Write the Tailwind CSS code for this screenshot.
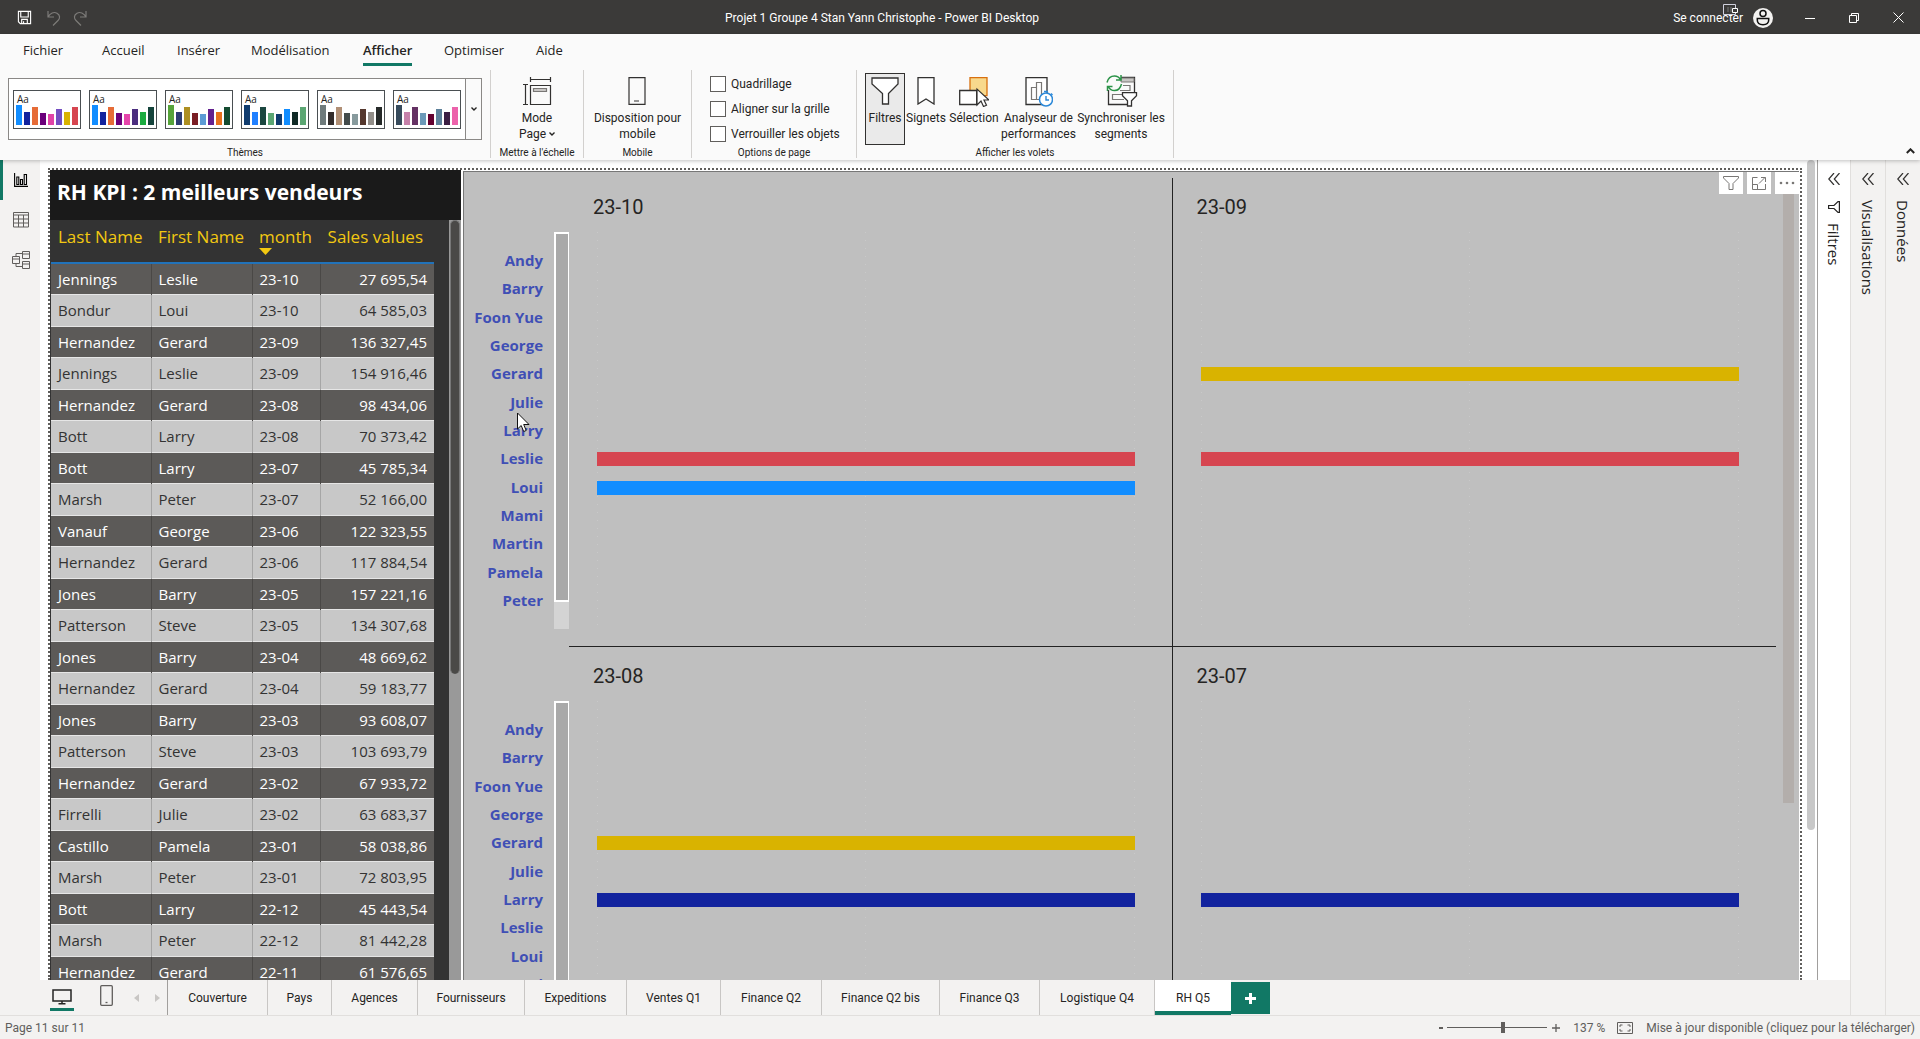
<!DOCTYPE html>
<html lang="fr">
<head>
<meta charset="utf-8">
<title>Projet 1 Groupe 4 Stan Yann Christophe - Power BI Desktop</title>
<script src="https://cdn.jsdelivr.net/npm/@tailwindcss/browser@4"></script>
</head>
<body class="h-screen flex flex-col overflow-hidden bg-[#f3f2f1] font-['Open_Sans','Noto_Sans',sans-serif] text-[#252423]">

<!-- Title bar -->
<header class="relative h-[34px] shrink-0 bg-[#3b3a39] text-white flex items-center justify-between pt-px font-[Roboto,sans-serif] text-xs">
  <div class="flex items-center gap-3 pl-[17px]">
    <button aria-label="Enregistrer" class="w-[18px]"><svg width="15" height="15" viewBox="0 0 16 16" fill="none" stroke="#fff" stroke-width="1.2"><path d="M1.5 1.5h13v13h-11l-2-2zM4 1.5v6h8v-6M5 14.500v-4.500h6v4.500M7 12v2.500"/></svg></button>
    <button aria-label="Annuler" class="w-[14px]"><svg width="14" height="16" viewBox="0 0 14 16" fill="none" stroke="#7d7b79" stroke-width="1.2"><path d="M1 1v6h6M1 7C3 3 7 1.500 10 3.200c3.500 2 3 5.300 1 7.300L6 15.500"/></svg></button>
    <button aria-label="Rétablir" class="w-[14px]"><svg width="14" height="16" viewBox="0 0 14 16" fill="none" stroke="#7d7b79" stroke-width="1.2"><path d="M13 1v6H7M13 7C11 3 7 1.500 4 3.200c-3.500 2-3 5.300-1 7.300l5 5"/></svg></button>
  </div>
  <h1 class="absolute left-1/2 -translate-x-1/2 pr-[156px] whitespace-nowrap">Projet 1 Groupe 4 Stan Yann Christophe - Power BI Desktop</h1>
  <div class="flex items-center pr-4">
    <div class="relative"><button>Se connecter</button>
      <svg class="absolute -top-[6px] left-[50px]" width="16" height="12" viewBox="0 0 16 12"><path d="M.5.5h12v10H.5z" fill="#3b3a39" stroke="#d0d0dc"/><path d="M5 3v5M8 3v5" stroke="#777"/><path d="M9.500 4.500h5v4h-5z" fill="#3b3a39" stroke="#fff"/></svg></div>
    <button aria-label="Compte" class="ml-[10px]"><svg width="20" height="20" viewBox="0 0 20 20"><circle cx="10" cy="10" r="10" fill="#f3f2f1"/><circle cx="10" cy="5.500" r="3" fill="none" stroke="#111" stroke-width="1.500"/><path d="M4.300 10.500h11.400v1.500c0 3-2.500 4.700-5.700 4.700s-5.700-1.700-5.700-4.700z" fill="none" stroke="#111" stroke-width="1.500"/></svg></button>
    <button aria-label="Réduire" class="ml-8"><svg width="10" height="10"><path d="M0 5.500h10" stroke="#fff"/></svg></button>
    <button aria-label="Restaurer" class="ml-[34px]"><svg width="10" height="10" viewBox="0 0 10 10" fill="none" stroke="#fff"><path d="M.5 2.500h7v7h-7zM2.500 2.500v-2h7v7h-2"/></svg></button>
    <button aria-label="Fermer" class="ml-[34px]"><svg width="11" height="11" viewBox="0 0 11 11" stroke="#fff"><path d="M.5.500l10 10M10.500.500l-10 10"/></svg></button>
  </div>
</header>

<!-- Ribbon -->
<div class="relative z-10 h-[126px] shrink-0 bg-[#fafafa] shadow-[0_1px_4px_rgba(0,0,0,0.25)]">
  <nav class="flex h-8 items-end pl-[23px] text-[13px] leading-6">
    <a href="#" class="w-[79px] pb-1">Fichier</a>
    <a href="#" class="w-[75px] pb-1">Accueil</a>
    <a href="#" class="w-[74px] pb-1">Insérer</a>
    <a href="#" class="w-[112px] pb-1">Modélisation</a>
    <a href="#" class="w-[81px] font-semibold"><span class="inline-block border-b-[3px] border-[#117865] pb-px">Afficher</span></a>
    <a href="#" class="w-[92px] pb-1">Optimiser</a>
    <a href="#" class="pb-1">Aide</a>
  </nav>
  <div class="flex h-[88px] mt-1 font-[Roboto,sans-serif] text-xs leading-4">
    <section class="w-[491px] border-r border-[#d2d0ce] flex flex-col pl-2 pr-2 pt-2">
      <div class="flex h-[62px] border border-[#8a8886] bg-white">
        <div id="themes" class="flex-1 flex items-center gap-2 pl-1"></div>
        <button aria-label="Plus de thèmes" class="w-4 border-l border-[#8a8886] bg-[#fafafa] grid place-items-center"><svg width="6" height="4" viewBox="0 0 6 4" fill="none" stroke="#252423" stroke-width="1.400"><path d="M.5.500L3 3 5.500.500"/></svg></button>
      </div>
      <h2 class="mt-auto -mb-px text-[10px] leading-3 text-center">Thèmes</h2>
    </section>
    <section class="w-[93px] border-r border-[#d2d0ce] flex flex-col items-center pt-[7px]">
      <button class="flex flex-col items-center">
        <svg width="30" height="28" viewBox="0 0 30 28" fill="none" stroke="#323130" stroke-width="1.200"><path d="M8.500 2.500h20M8.500 0v5M28.500 0v5M3.500 8v19M1 7.500h5M1 27.500h5M8.500 8.500h20v19h-20z"/><path d="M11.500 11.500h13v3h-13z" fill="#c8c6c4" stroke="#797775"/></svg>
        <span class="mt-[5px]">Mode</span><span class="flex items-center gap-[3px]">Page <svg width="6" height="4" viewBox="0 0 6 4" fill="none" stroke="#252423" stroke-width="1.400"><path d="M.5.500L3 3 5.500.500"/></svg></span></button>
      <h2 class="mt-auto -mb-px text-[10px] leading-3">Mettre à l'échelle</h2>
    </section>
    <section class="w-[108px] border-r border-[#d2d0ce] flex flex-col items-center pt-[7px]">
      <button class="flex flex-col items-center">
        <svg width="18" height="28" viewBox="0 0 18 28" fill="none" stroke="#323130" stroke-width="1.200"><path d="M1 .600h16v26.800H1zM6 24h5"/></svg>
        <span class="mt-[5px]">Disposition pour</span><span>mobile</span></button>
      <h2 class="mt-auto -mb-px text-[10px] leading-3">Mobile</h2>
    </section>
    <section class="w-[165px] border-r border-[#d2d0ce] flex flex-col pt-[6px]">
      <div class="flex flex-col gap-[9px] pl-[18px]">
        <label class="flex items-center gap-[5px]"><input type="checkbox" class="appearance-none size-4 border border-[#605e5c] bg-white">Quadrillage</label>
        <label class="flex items-center gap-[5px]"><input type="checkbox" class="appearance-none size-4 border border-[#605e5c] bg-white">Aligner sur la grille</label>
        <label class="flex items-center gap-[5px]"><input type="checkbox" class="appearance-none size-4 border border-[#605e5c] bg-white">Verrouiller les objets</label>
      </div>
      <h2 class="mt-auto -mb-px text-[10px] leading-3 text-center">Options de page</h2>
    </section>
    <section class="w-[317px] border-r border-[#d2d0ce] flex flex-col pt-[3px]">
      <div class="flex pl-2">
        <button class="w-10 h-[72px] shrink-0 border border-[#323130] bg-[#eaeaea] flex flex-col items-center pt-[3px]">
          <svg width="28" height="28" viewBox="0 0 28 28" fill="#fff" stroke="#323130" stroke-width="1.300"><path d="M1 1h26v6l-9.500 9.500V27h-6V16.500L1 7z"/></svg><span class="mt-[5px]">Filtres</span></button>
        <button class="w-[42px] shrink-0 flex flex-col items-center pt-1">
          <svg width="18" height="28" viewBox="0 0 18 28" fill="#fff" stroke="#323130" stroke-width="1.300"><path d="M1 .700h16V27l-8-5-8 5z"/></svg><span class="mt-[5px]">Signets</span></button>
        <button class="w-[54px] shrink-0 flex flex-col items-center pt-1">
          <svg width="30" height="30" viewBox="0 0 30 30"><path d="M11 .700h17v18H11z" fill="#f8d98c" stroke="#d8700f" stroke-width="1.300"/><path d="M.700 13.500h17v14h-17z" fill="#fff" stroke="#323130" stroke-width="1.300"/><path d="M18 12v16l4-4 2.500 5.500 3-1.300-2.500-5.200h5z" fill="#fff" stroke="#323130" stroke-width="1.200"/></svg><span class="mt-[3px]">Sélection</span></button>
        <button class="w-[75px] shrink-0 flex flex-col items-center pt-1">
          <svg width="28" height="30" viewBox="0 0 28 30" fill="none"><path d="M1 .700h21V27.500H1z" fill="#fff" stroke="#323130" stroke-width="1.300"/><path d="M6.500 10.500h5v12h-5zM11.500 5.500h5v17h-5z" stroke="#797775" stroke-width="1.200"/><circle cx="21" cy="22.500" r="6.500" fill="#fff" stroke="#2b88d8" stroke-width="1.500"/><path d="M21 19v4h3M19 14.500h4M26 16.500l1.500 1.500" stroke="#2b88d8" stroke-width="1.400"/></svg><span class="mt-[3px]">Analyseur de</span><span>performances</span></button>
        <button class="w-[90px] shrink-0 flex flex-col items-center pt-[2px]">
          <svg width="34" height="32" viewBox="0 0 34 32" fill="none"><path d="M4.500 15v14.500h19M17 2.500h13.500V17" stroke="#323130" stroke-width="1.300"/><path d="M17 3h13v4H17z" fill="#c8c6c4" stroke="#797775"/><path d="M19 10.500h7v5h-10M20 19.500H8.500v5H20" stroke="#797775" stroke-width="1.200"/><path d="M3 7.500c1-4 4-6.500 7.500-6.500 2.500 0 4.500 1 6 3.500M17 0v5h-5M17.500 9c-1 4-3.500 6.500-7 6.500-2.700 0-4.700-1-6-3.500M3.500 16v-4.500h5" stroke="#2b9348" stroke-width="1.500"/><path d="M18.500 17.700h14v3l-5 5V31h-4v-5.300l-5-5z" fill="#fff" stroke="#323130" stroke-width="1.300"/></svg><span class="mt-[3px]">Synchroniser les</span><span>segments</span></button>
      </div>
      <h2 class="mt-auto -mb-px text-[10px] leading-3 text-center">Afficher les volets</h2>
    </section>
    <button aria-label="Réduire le ruban" class="ml-auto mr-[5px] self-end pb-1"><svg width="9" height="6" viewBox="0 0 9 6" fill="none" stroke="#252423" stroke-width="2"><path d="M.800 5L4.500 1.300 8.200 5"/></svg></button>
  </div>
</div>

<main class="flex-1 min-h-0 flex">
  <div class="flex-1 min-w-0 flex flex-col">
    <div class="flex-1 min-h-0 flex">
      <!-- View switcher -->
      <nav class="w-10 shrink-0 flex flex-col">
        <button aria-label="Rapport" class="h-10 border-l-[3px] border-[#117865] pl-[11px]"><svg width="14" height="14" viewBox="0 0 14 14" fill="none" stroke="#000" stroke-width="1.100"><path d="M.6 0v13.400H14M2.800 11.500v-7.500h2v7.500zM6.500 11.500V6.500h2v5zM10.200 11.500V1.500h2.300v10z"/></svg></button>
        <button aria-label="Table" class="h-10 pl-[13px]"><svg width="16" height="16" viewBox="0 0 16 16" fill="none" stroke="#605e5c"><path d="M.5.500h15v14.500H.5zM.5 3h15M.5 7h15M.5 11h15M5.500 3v12M10.500 3v12"/></svg></button>
        <button aria-label="Modèle" class="h-10 pl-3"><svg width="18" height="18" viewBox="0 0 18 18" fill="none" stroke="#605e5c"><path d="M.5 5.500h7v7h-7zM.5 8h7M10.500.500h7v7h-7zM10.500 3h7M10.500 10.500h7v7h-7zM10.500 13h7M4 5.500v-3h6.500M4 12.500v3h6.500"/></svg></button>
      </nav>

      <!-- Report canvas -->
      <div class="flex-1 min-w-0 flex bg-white overflow-hidden">
        <div class="flex-1 min-w-0 ml-2 mt-2 flex border-2 border-b-0 border-dotted border-[#605e5c]">
          <section class="w-[411px] shrink-0 bg-[#333] overflow-hidden">
            <h2 class="h-[50px] bg-[#1a1a1a] text-white font-bold text-[21px] leading-[44px] pl-[7px]">RH KPI : 2 meilleurs vendeurs</h2>
            <div class="flex justify-between h-full">
              <table class="w-[383px] ml-px table-fixed border-collapse self-start">
                <colgroup><col class="w-[100px]"><col class="w-[101px]"><col class="w-[68px]"><col class="w-[114px]"></colgroup>
                <thead><tr class="h-[43px] border-b-2 border-[#2172b9] text-[#f2c811] text-[17px] leading-6 text-left whitespace-nowrap">
                  <th class="font-normal pl-[7px] pt-[5px] align-top">Last Name</th><th class="font-normal pl-[7px] pt-[5px] align-top">First Name</th>
                  <th class="font-normal pl-[7px] pt-[5px] align-top relative">month<svg class="absolute left-[7px] top-[28px]" width="13" height="7"><path d="M0 0h13L6.500 7z" fill="#f2c811"/></svg></th>
                  <th class="font-normal pr-[11px] pt-[5px] align-top text-right">Sales values</th></tr></thead>
                <tbody id="rows" class="text-[15px] leading-6"></tbody>
              </table>
              <div class="w-3 bg-[#999] px-px"><div class="h-[454px] rounded-full bg-[#4a4947] border-x border-t border-[#777]"></div></div>
            </div>
          </section>

          <section class="relative flex-1 min-w-0 ml-[2px] mt-px mr-px bg-[#bfbfbf] border-l border-t border-[#777] flex overflow-hidden">
            <div id="facets" class="flex-1 min-w-0 pt-[6px]"></div>
            <div class="w-[7px] shrink-0"></div>
            <div class="w-[11px] h-[631px] bg-[#b3aeab] shrink-0 mr-[5px]"></div>
            <div class="absolute top-0 right-0 flex gap-1">
              <button aria-label="Filtres" class="w-6 h-[22px] bg-white grid place-items-center"><svg width="16" height="14" viewBox="0 0 16 14" fill="none" stroke="#797775"><path d="M.5.500h15v1.500L10 7.500v6H6v-6L.5 2z"/></svg></button>
              <button aria-label="Mode focus" class="w-6 h-[22px] bg-white grid place-items-center"><svg width="14" height="13" viewBox="0 0 14 13" fill="none" stroke="#797775"><path d="M5.500.500h-5v12h13V7M.5 7.500h5v5M7 6.500l6-6M9 .500h4.500V5"/></svg></button>
              <button aria-label="Plus d'options" class="w-6 h-[22px] bg-white grid place-items-center"><svg width="16" height="4" fill="#797775"><circle cx="2" cy="2" r="1.300"/><circle cx="8" cy="2" r="1.300"/><circle cx="14" cy="2" r="1.300"/></svg></button>
            </div>
            <svg class="absolute left-[53px] top-[240px]" width="13" height="21" viewBox="0 0 13 21"><path d="M.5 1v16l3.700-3.500 2.500 6 2.500-1-2.500-6H12z" fill="#fff" stroke="#111"/></svg>
          </section>
        </div>
        <div class="w-[15px] shrink-0 pl-[5px]"><div class="w-2 h-[670px] rounded-full bg-[#c8c8c8]"></div></div>
      </div>

      <!-- Collapsed filter pane -->
      <aside class="w-[33px] shrink-0 bg-white border-l border-[#a19f9d] flex flex-col items-center pt-[13px]">
        <button aria-label="Développer Filtres"><svg width="12" height="12" viewBox="0 0 12 12" fill="none" stroke="#323130" stroke-width="1.200"><path d="M6 0L.800 6 6 12M11.500 0L6.300 6l5.200 6"/></svg></button>
        <svg class="mt-4" width="12" height="12" viewBox="0 0 12 12" fill="none" stroke="#252423" stroke-width="1.200"><path d="M11.400.600v10.800H10L6 7.500H.6v-3H6L10 .600z"/></svg>
        <h2 class="mt-[10px] text-[15px] leading-5 font-medium [writing-mode:vertical-rl]">Filtres</h2>
      </aside>
    </div>

    <!-- Page tabs -->
    <nav class="h-[35px] shrink-0 flex items-stretch font-[Roboto,sans-serif] text-xs">
      <div class="w-[168px] shrink-0 border-r border-[#a19f9d] flex items-start pl-[50px]">
        <button aria-label="Disposition bureau" class="w-6 h-[31px] pt-[6px] pl-[2px] border-b-[3px] border-[#117865]"><svg width="20" height="16" viewBox="0 0 20 16" fill="none" stroke="#252423" stroke-width="1.500"><path d="M1 1h18v11H1zM10 12v3M6.500 14.700h7"/></svg></button>
        <button aria-label="Disposition mobile" class="ml-[26px] pt-[5px]"><svg width="13" height="21" viewBox="0 0 13 21" fill="none" stroke="#605e5c" stroke-width="1.300"><rect x=".7" y=".7" width="11.600" height="19.600" rx="1"/><path d="M5.500 17.500h2"/></svg></button>
        <button aria-label="Page précédente" class="ml-[21px] pt-[14px]"><svg width="5" height="8"><path d="M5 0v8L0 4z" fill="#c8c6c4"/></svg></button>
        <button aria-label="Page suivante" class="ml-[16px] pt-[14px]"><svg width="5" height="8"><path d="M0 0v8l5-4z" fill="#c8c6c4"/></svg></button>
      </div>
      <a href="#" class="w-[100px] pt-px border-r border-[#c8c6c4] grid place-items-center">Couverture</a>
      <a href="#" class="w-[64px] pt-px border-r border-[#c8c6c4] grid place-items-center">Pays</a>
      <a href="#" class="w-[86px] pt-px border-r border-[#c8c6c4] grid place-items-center">Agences</a>
      <a href="#" class="w-[107px] pt-px border-r border-[#c8c6c4] grid place-items-center">Fournisseurs</a>
      <a href="#" class="w-[102px] pt-px border-r border-[#c8c6c4] grid place-items-center">Expeditions</a>
      <a href="#" class="w-[94px] pt-px border-r border-[#c8c6c4] grid place-items-center">Ventes Q1</a>
      <a href="#" class="w-[101px] pt-px border-r border-[#c8c6c4] grid place-items-center">Finance Q2</a>
      <a href="#" class="w-[118px] pt-px border-r border-[#c8c6c4] grid place-items-center">Finance Q2 bis</a>
      <a href="#" class="w-[100px] pt-px border-r border-[#c8c6c4] grid place-items-center">Finance Q3</a>
      <a href="#" class="w-[115px] pt-px border-r border-[#c8c6c4] grid place-items-center">Logistique Q4</a>
      <a href="#" class="w-[76px] bg-white border-b-4 border-[#117865] grid place-items-center pt-[5px]">RH Q5</a>
      <button aria-label="Nouvelle page" class="w-[39px] mt-[2px] mb-px bg-[#117865] grid place-items-center"><svg width="11" height="11" stroke="#fff" stroke-width="3"><path d="M5.500 0v11M0 5.500h11"/></svg></button>
    </nav>
  </div>

  <aside class="w-[35px] shrink-0 border-l border-[#e1dfdd] flex flex-col items-center pt-[13px]">
    <button aria-label="Développer Visualisations"><svg width="12" height="12" viewBox="0 0 12 12" fill="none" stroke="#323130" stroke-width="1.200"><path d="M6 0L.800 6 6 12M11.500 0L6.300 6l5.200 6"/></svg></button>
    <h2 class="mt-[15px] text-[15px] leading-5 font-medium [writing-mode:vertical-rl]">Visualisations</h2>
  </aside>
  <aside class="w-[35px] shrink-0 border-l border-[#e1dfdd] flex flex-col items-center pt-[13px]">
    <button aria-label="Développer Données"><svg width="12" height="12" viewBox="0 0 12 12" fill="none" stroke="#323130" stroke-width="1.200"><path d="M6 0L.800 6 6 12M11.500 0L6.300 6l5.200 6"/></svg></button>
    <h2 class="mt-[15px] text-[15px] leading-5 font-medium [writing-mode:vertical-rl]">Données</h2>
  </aside>
</main>

<!-- Status bar -->
<footer class="h-6 shrink-0 border-t border-[#e1dfdd] flex items-center px-[5px] font-[Roboto,sans-serif] text-xs text-[#605e5c]">
  <span>Page 11 sur 11</span>
  <div class="ml-auto flex items-center">
    <button aria-label="Zoom arrière" class="w-1 h-[2px] bg-[#605e5c]"></button>
    <input type="range" aria-label="Zoom" min="10" max="264" value="153" class="ml-1 appearance-none w-[100px] h-4 bg-transparent [&::-webkit-slider-runnable-track]:h-px [&::-webkit-slider-runnable-track]:bg-[#605e5c] [&::-webkit-slider-thumb]:appearance-none [&::-webkit-slider-thumb]:w-1 [&::-webkit-slider-thumb]:h-[11px] [&::-webkit-slider-thumb]:-mt-[5px] [&::-webkit-slider-thumb]:bg-[#605e5c]">
    <button aria-label="Zoom avant" class="ml-[5px] grid place-items-center"><svg width="8" height="8" stroke="#605e5c"><path d="M4 0v8M0 4h8" stroke-width="1.300"/></svg></button>
    <span class="ml-[13px]">137 %</span>
    <button aria-label="Ajuster à la page" class="ml-3"><svg width="16" height="12" viewBox="0 0 16 12" fill="none" stroke="#605e5c"><path d="M.5.500h15v11H.5zM3 5V3h2.500M10.500 3H13v2M13 7v2h-2.500M5.500 9H3V7"/></svg></button>
    <a href="#" class="ml-[13px]">Mise à jour disponible (cliquez pour la télécharger)</a>
  </div>
</footer>

<script>
// Theme thumbnails: one list of bar colours per theme
const heights = [20, 13, 18, 12, 11, 16, 13, 18];
const themes = [
  ['#118dff','#12239e','#e66c37','#6b007b','#e044a7','#744ec2','#d9b300','#d64550'],
  ['#118dff','#12239e','#e66c37','#6b007b','#e645ab','#4b2e7f','#1aab40','#15443c'],
  ['#56a33a','#2d3c72','#ad8f22','#7a1d24','#5b9bd5','#63208f','#e8711c','#144b31'],
  ['#103c6e','#2080ff','#1b4740','#5ba673','#103c6e','#118dff','#102a26','#5ba673'],
  ['#6e7a7b','#322c2b','#b08f75','#434b4b','#879a9d','#55382e','#928e89','#262a29'],
  ['#374b5c','#c681aa','#643163','#6c9ab9','#63002f','#5c809a','#3b1e42','#ec62ab'],
];
document.getElementById('themes').innerHTML = themes.map((t, i) => `
  <button aria-label="Thème ${i + 1}" class="w-[68px] h-[39px] border border-[#4a4f52] bg-white px-[2px] pt-px pb-[3px] flex flex-col justify-between text-left font-['Open_Sans',sans-serif] text-[10px] leading-[14px]">
    <span class="px-px">Aa</span>
    <span class="flex items-end gap-[2px] -mt-1">${t.map((c, j) => `<span class="w-[6px] shrink-0" style="background:${c};height:${heights[j]}px"></span>`).join('')}</span>
  </button>`).join('');

const data = `Jennings|Leslie|23-10|27 695,54
Bondur|Loui|23-10|64 585,03
Hernandez|Gerard|23-09|136 327,45
Jennings|Leslie|23-09|154 916,46
Hernandez|Gerard|23-08|98 434,06
Bott|Larry|23-08|70 373,42
Bott|Larry|23-07|45 785,34
Marsh|Peter|23-07|52 166,00
Vanauf|George|23-06|122 323,55
Hernandez|Gerard|23-06|117 884,54
Jones|Barry|23-05|157 221,16
Patterson|Steve|23-05|134 307,68
Jones|Barry|23-04|48 669,62
Hernandez|Gerard|23-04|59 183,77
Jones|Barry|23-03|93 608,07
Patterson|Steve|23-03|103 693,79
Hernandez|Gerard|23-02|67 933,72
Firrelli|Julie|23-02|63 683,37
Castillo|Pamela|23-01|58 038,86
Marsh|Peter|23-01|72 803,95
Bott|Larry|22-12|45 443,54
Marsh|Peter|22-12|81 442,28
Hernandez|Gerard|22-11|61 576,65`.split('\n').map(r => r.split('|'));
document.getElementById('rows').innerHTML = data.map((r, i) => {
  const row = i % 2 ? 'h-8 bg-[#c8c8c8] text-[#333] border-b border-[#e6e6e6]' : 'h-[31px] bg-[#5c5a58] text-white border-b border-[#e6e6e6]';
  const line = i % 2 ? 'border-r border-[#a6a6a6] pl-[7px]' : 'border-r border-[#4a4846] pl-[7px]';
  return `<tr class="${row}"><td class="${line}">${r[0]}</td><td class="${line}">${r[1]}</td><td class="${line}">${r[2]}</td><td class="pr-[7px] text-right">${r[3]}</td></tr>`;
}).join('');

// Small multiples: two rows of two months
const names = ['Andy','Barry','Foon Yue','George','Gerard','Julie','Larry','Leslie','Loui','Mami','Martin','Pamela','Peter'];
const facets = [
  [['23-10', {Leslie:'#d64550', Loui:'#118dff'}], ['23-09', {Gerard:'#d9b300', Leslie:'#d64550'}]],
  [['23-08', {Gerard:'#d9b300', Larry:'#12239e'}], ['23-07', {Larry:'#12239e'}]],
];
const grid = '<span class="w-px bg-[repeating-linear-gradient(#c9c9c9_0_1px,transparent_1px_8px)]"></span>';
document.getElementById('facets').innerHTML = facets.map(row => `
  <div class="flex h-[469px]">
    <div class="w-[79px] shrink-0 mt-[68px] h-[368px] grid auto-rows-fr items-center text-right text-[15px] leading-5 font-bold text-[#3f4fb5]">${names.map(n => `<span>${n}</span>`).join('')}</div>
    <div class="ml-[11px] mt-[54px] w-[15px] h-[397px] shrink-0 bg-[#d4d4d4]"><div class="h-[370px] bg-[#a9a9a9] border-2 border-r border-white"></div></div>
    <div class="flex-1 grid grid-cols-2 border-b border-[#222]">${row.map(([title, bars], k) => `
      <div class="${k ? 'relative pl-[28px] pr-[37px]' : 'relative pl-[28px] pr-[37px] border-r border-[#222]'}">
        <h3 class="h-[54px] pt-4 -ml-1 font-[Roboto,sans-serif] text-xl leading-[26px]">${title}</h3>
        <div class="relative h-[397px] pt-[15px]">
          <div class="absolute inset-0 flex justify-between">${grid}${grid}${grid}</div>
          <div class="relative h-[368px] grid auto-rows-fr items-center">${names.map(n => bars[n] ? `<span class="h-[14px]" style="background:${bars[n]}"></span>` : '<span></span>').join('')}</div>
        </div>
      </div>`).join('')}</div>
  </div>`).join('');
</script>
</body>
</html>
